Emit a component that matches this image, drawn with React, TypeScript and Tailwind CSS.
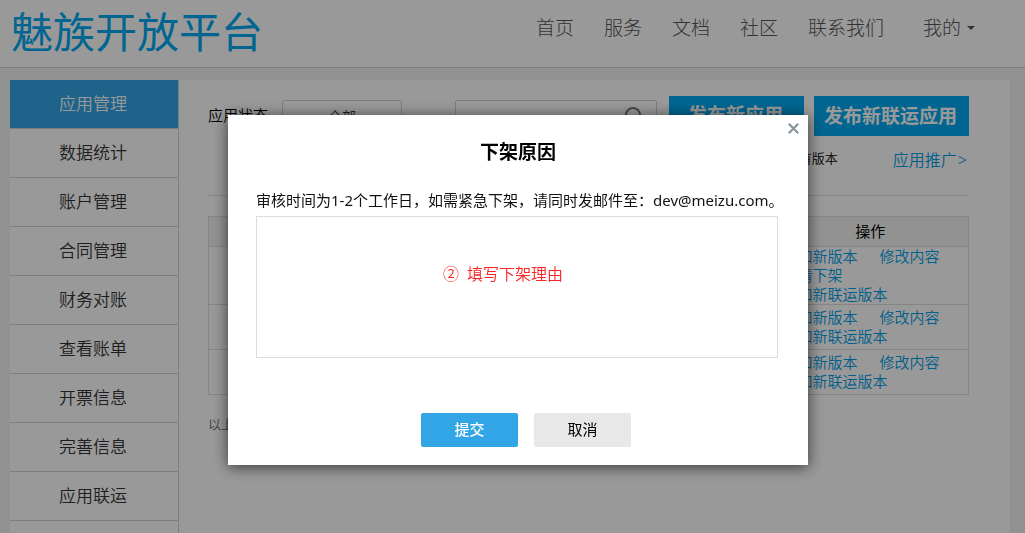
import React from "react";

const navLinks = ["首页", "服务", "文档", "社区", "联系我们"];

const menu = [
  "应用管理",
  "数据统计",
  "账户管理",
  "合同管理",
  "财务对账",
  "查看账单",
  "开票信息",
  "完善信息",
  "应用联运",
];

const rows: string[][][] = [
  [["添加新版本", "修改内容"], ["申请下架"], ["添加新联运版本"]],
  [["添加新版本", "修改内容"], ["添加新联运版本"]],
  [["添加新版本", "修改内容"], ["添加新联运版本"]],
];

function Header() {
  return (
    <header className="flex h-[68px] shrink-0 items-center justify-between border-b border-[#d2d2d2] bg-white pr-[50px] pl-[11px]">
      <a href="#home" className="pb-1 text-[42px] leading-[60px] font-normal whitespace-nowrap text-[#00a9f1]">
        魅族开放平台
      </a>
      <nav className="flex items-center gap-[30px] pb-3 text-[19px] leading-[28px] font-light whitespace-nowrap text-[#555]">
        {navLinks.map((label) => (
          <a key={label} href="#nav">
            {label}
          </a>
        ))}
        <button type="button" className="ml-[9px] flex items-center gap-[6px]">
          我的
          <svg width="8" height="4" viewBox="0 0 8 4" fill="currentColor" aria-hidden="true">
            <path d="M0 0h8L4 4z" />
          </svg>
        </button>
      </nav>
    </header>
  );
}

function Sidebar() {
  return (
    <aside className="w-[169px] shrink-0 border-r border-[#d2d2d2] bg-white">
      <ul>
        {menu.map((label, i) => (
          <li key={label} className="border-b border-[#d2d2d2]">
            <a
              href="#menu"
              className={
                i === 0
                  ? "block bg-[#32a5e7] pr-[2px] text-center text-[17px] leading-[48px] font-[350] text-white"
                  : "block pr-[2px] text-center text-[17px] leading-[48px] font-[350] text-[#333]"
              }
            >
              {label}
            </a>
          </li>
        ))}
      </ul>
    </aside>
  );
}

function Content() {
  return (
    <main className="min-w-0 flex-1 bg-white pt-4 pr-[41px] pl-[29px] font-[350]">
      <div className="flex items-center">
        <label htmlFor="status" className="pb-[2px] text-[15px] leading-[20px] text-black">
          应用状态
        </label>
        <select
          id="status"
          className="ml-[14px] h-8 w-[120px] appearance-none rounded-xs border border-[#d2d2d2] bg-white text-center text-[14px] text-[#333]"
        >
          <option>全部</option>
        </select>
        <div className="ml-auto flex h-8 w-[202px] items-center rounded-xs border border-[#d2d2d2] pr-3">
          <input type="search" aria-label="搜索" className="min-w-0 flex-1 outline-none" />
          <svg width="19" height="19" viewBox="0 0 19 19" fill="none" stroke="#777" strokeWidth="2" aria-hidden="true">
            <circle cx="8" cy="8" r="7" />
            <path d="M13 13l5 5" />
          </svg>
        </div>
        <button type="button" className="ml-3 h-10 w-[135px] bg-[#00a9f1] pr-[2px] pb-[2px] text-[19px] font-bold text-white">
          发布新应用
        </button>
        <button type="button" className="ml-[10px] h-10 w-[155px] bg-[#00a9f1] pr-[2px] text-[19px] font-bold text-white">
          发布新联运应用
        </button>
      </div>
      <div className="flex h-[60px] items-start justify-end border-b border-[#dedede] pt-3 pr-[2px]">
        <span className="mr-[55px] text-[13px] leading-[20px] text-black">所有版本</span>
        <a href="#promote" className="flex gap-px text-[16px] leading-[24px] text-[#00a0e9]">
          应用推广<span>&gt;</span>
        </a>
      </div>
      <table className="mt-5 w-full border-collapse border border-[#dedede] text-[15px] leading-[19px]">
        <thead>
          <tr className="h-[30px] bg-[#f4f4f4]">
            <td className="border-b border-[#dedede]" />
            <th className="w-[196px] border-b border-[#dedede] font-normal">操作</th>
          </tr>
        </thead>
        <tbody>
          {rows.map((lines, r) => (
            <tr key={r} className="h-[45px] border-b border-[#dedede]">
              <td />
              <td className="px-[10px]">
                {lines.map((links, l) => (
                  <div key={l} className="flex gap-[22px] whitespace-nowrap">
                    {links.map((link) => (
                      <a key={link} href="#action" className="text-[#00a0e9]">
                        {link}
                      </a>
                    ))}
                  </div>
                ))}
              </td>
            </tr>
          ))}
        </tbody>
      </table>
      <p className="mt-5 text-[13px] leading-[18px] text-[#666]">以上</p>
    </main>
  );
}

function Dialog() {
  return (
    <div className="fixed inset-0 flex items-start justify-center bg-black/40 pt-[115px] pl-[11px]">
      <section
        role="dialog"
        aria-modal="true"
        aria-labelledby="dialog-title"
        className="relative w-[580px] bg-white px-7 pt-[23px] pb-[18px] shadow-[0_2px_14px_rgba(0,0,0,0.65)]"
      >
        <button type="button" aria-label="关闭" className="absolute top-[7px] right-2 p-px">
          <svg width="11" height="11" viewBox="0 0 11 11" stroke="#87939a" strokeWidth="2.2" aria-hidden="true">
            <path d="M.8.8l9.4 9.4M10.2.8L.8 10.2" />
          </svg>
        </button>
        <h2 id="dialog-title" className="text-center text-[19px] leading-[28px] font-bold text-black">
          下架原因
        </h2>
        <label
          htmlFor="reason"
          className="mt-6 block text-[15px] leading-[20px] font-normal whitespace-nowrap text-[#111]"
        >
          审核时间为1-2个工作日，如需紧急下架，请同时发邮件至：dev@meizu.com。
        </label>
        <div className="relative mt-[6px] mr-[2px]">
          <textarea id="reason" className="block h-[142px] w-full resize-none border border-[#dcdcdc] outline-none" />
          <span className="pointer-events-none absolute top-[46px] left-[187px] flex gap-2 text-[16px] leading-[24px] font-[350] text-[#ff2222]">
            <span>②</span>
            <span>填写下架理由</span>
          </span>
        </div>
        <div className="mt-[55px] flex justify-center gap-4 pl-4 text-[15px]">
          <button type="button" className="h-[34px] w-[97px] rounded-xs bg-[#32a5e7] pb-[2px] font-medium text-white">
            提交
          </button>
          <button type="button" className="h-[34px] w-[97px] rounded-xs bg-[#e8e8e8] pb-[2px] text-black">
            取消
          </button>
        </div>
      </section>
    </div>
  );
}

export default function App() {
  return (
    <div className="flex h-screen flex-col overflow-hidden bg-[#f2f2f2] font-['Noto_Sans','Noto_Sans_CJK_SC',sans-serif]">
      <Header />
      <div className="mt-3 mr-[15px] ml-[10px] flex flex-1">
        <Sidebar />
        <Content />
      </div>
      <Dialog />
    </div>
  );
}
